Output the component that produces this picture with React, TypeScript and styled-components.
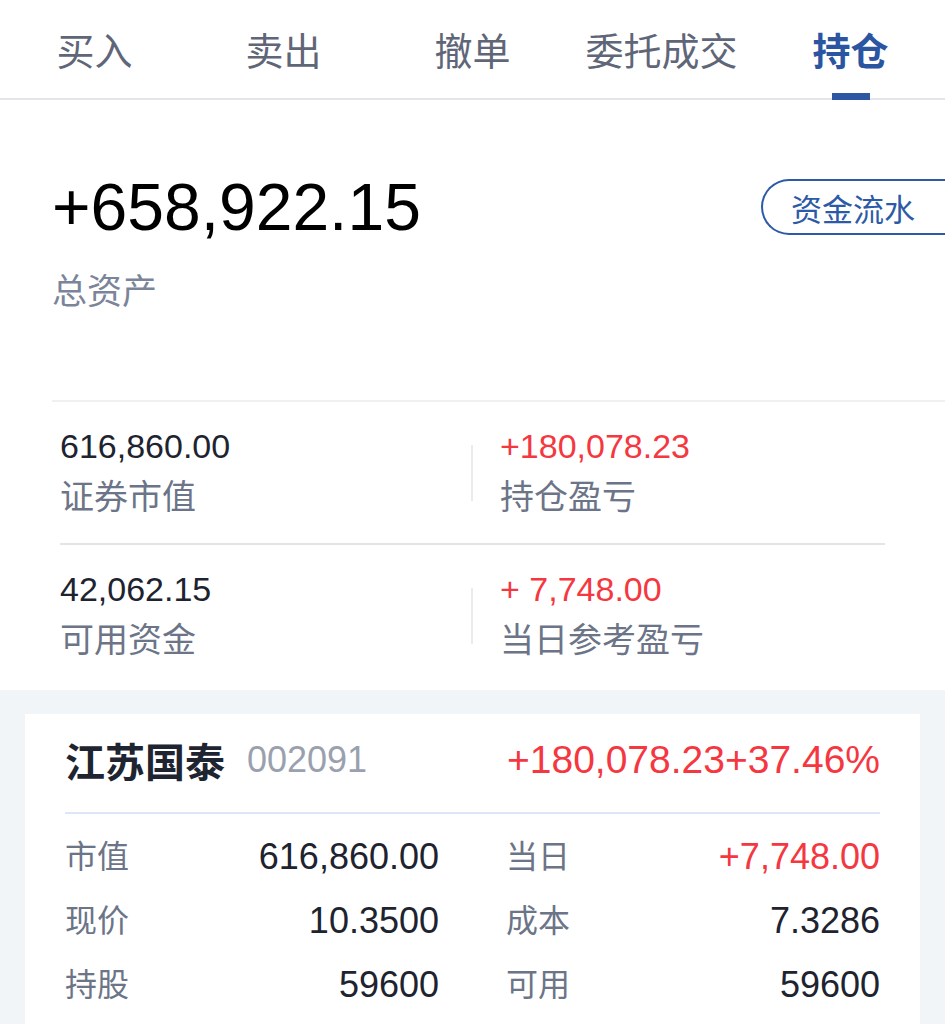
import React from "react";
import styled, { createGlobalStyle } from "styled-components";

const GlobalStyle = createGlobalStyle`
  * { box-sizing: border-box; }
  body {
    margin: 0;
    background: #ffffff;
    font-family: "Liberation Sans", "Noto Sans CJK SC", sans-serif;
  }
`;

const tabs = ["买入", "卖出", "撤单", "委托成交", "持仓"];

const stats = [
  [
    { value: "616,860.00", label: "证券市值", up: false },
    { value: "+180,078.23", label: "持仓盈亏", up: true },
  ],
  [
    { value: "42,062.15", label: "可用资金", up: false },
    { value: "+ 7,748.00", label: "当日参考盈亏", up: true },
  ],
];

const details = [
  ["市值", "616,860.00", "当日", "+7,748.00"],
  ["现价", "10.3500", "成本", "7.3286"],
  ["持股", "59600", "可用", "59600"],
];

const App = () => {
  return (
    <>
      <GlobalStyle />
      <Page>
        <TabBar>
          {tabs.map((t, i) => (
            <Tab key={t} active={i === tabs.length - 1}>
              {t}
              {i === tabs.length - 1 && <Indicator />}
            </Tab>
          ))}
        </TabBar>

        <Summary>
          <TotalRow>
            <Total>+658,922.15</Total>
            <FlowButton>资金流水</FlowButton>
          </TotalRow>
          <TotalLabel>总资产</TotalLabel>
        </Summary>

        <Stats>
          {stats.map((row, r) => (
            <StatRow key={r} last={r === stats.length - 1}>
              <StatCell>
                <StatValue up={row[0].up}>{row[0].value}</StatValue>
                <StatLabel>{row[0].label}</StatLabel>
              </StatCell>
              <Sep />
              <StatCell right>
                <StatValue up={row[1].up}>{row[1].value}</StatValue>
                <StatLabel>{row[1].label}</StatLabel>
              </StatCell>
            </StatRow>
          ))}
        </Stats>

        <Holdings>
          <Card>
            <CardHeader>
              <Name>江苏国泰</Name>
              <Code>002091</Code>
              <Profit>+180,078.23+37.46%</Profit>
            </CardHeader>
            <DetailList>
              {details.map((d) => (
                <DetailRow key={d[0]}>
                  <Pair>
                    <DLabel>{d[0]}</DLabel>
                    <DValue>{d[1]}</DValue>
                  </Pair>
                  <Pair>
                    <DLabel>{d[2]}</DLabel>
                    <DValue up={d[3].startsWith("+")}>{d[3]}</DValue>
                  </Pair>
                </DetailRow>
              ))}
            </DetailList>
          </Card>
        </Holdings>
      </Page>
    </>
  );
};

export default App;

const Page = styled.div`
  width: 945px;
  overflow: hidden;
`;

const TabBar = styled.div`
  display: flex;
  height: 100px;
  border-bottom: 2px solid #e4e5ea;
`;

const Tab = styled.div<{ active?: boolean }>`
  position: relative;
  flex: 1;
  display: flex;
  align-items: center;
  justify-content: center;
  padding-bottom: 2px;
  font-size: 38px;
  font-weight: ${(p) => (p.active ? 700 : 400)};
  color: ${(p) => (p.active ? "#2b55a1" : "#5f6678")};
`;

const Indicator = styled.span`
  position: absolute;
  left: 50%;
  bottom: -2px;
  width: 38px;
  height: 7px;
  margin-left: -19px;
  background: #2d57a2;
`;

const Summary = styled.div`
  padding: 74px 0 0 52px;
  height: 300px;
`;

const TotalRow = styled.div`
  display: flex;
  align-items: center;
  justify-content: space-between;
  height: 66px;
`;

const Total = styled.div`
  font-size: 66px;
  line-height: 66px;
  color: #000000;
`;

const FlowButton = styled.div`
  display: flex;
  align-items: center;
  height: 56px;
  padding: 0 30px 0 28px;
  border: 2px solid #2d5aa6;
  border-right: none;
  border-radius: 28px 0 0 28px;
  font-size: 31px;
  color: #2d5aa6;
`;

const TotalLabel = styled.div`
  margin-top: 30px;
  font-size: 35px;
  line-height: 44px;
  color: #7b859a;
`;

const Stats = styled.div`
  margin-left: 52px;
  border-top: 2px solid #f0f0f2;
`;

const StatRow = styled.div<{ last?: boolean }>`
  display: grid;
  grid-template-columns: 411px 2px 1fr;
  align-items: center;
  margin: 0 60px 0 8px;
  padding: 24px 0 ${(p) => (p.last ? "28px" : "24px")};
  border-bottom: ${(p) => (p.last ? "none" : "2px solid #e3e3e8")};
`;

const StatCell = styled.div<{ right?: boolean }>`
  display: flex;
  flex-direction: column;
  gap: 9px;
  padding-left: ${(p) => (p.right ? "27px" : "0")};
`;

const StatValue = styled.div<{ up?: boolean }>`
  font-size: 34px;
  line-height: 40px;
  color: ${(p) => (p.up ? "#f5373f" : "#1e2330")};
`;

const StatLabel = styled.div`
  font-size: 34px;
  line-height: 44px;
  color: #6c7487;
`;

const Sep = styled.div`
  width: 2px;
  height: 56px;
  background: #ebebee;
`;

const Holdings = styled.div`
  background: #f2f5f7;
  padding: 24px 25px 40px;
`;

const Card = styled.div`
  background: #ffffff;
  padding: 0 40px 20px;
`;

const CardHeader = styled.div`
  display: flex;
  align-items: center;
  height: 100px;
  padding-bottom: 6px;
  border-bottom: 2px solid #dde6f7;
`;

const Name = styled.div`
  font-size: 40px;
  font-weight: 700;
  color: #1f2431;
`;

const Code = styled.div`
  margin-left: 22px;
  font-size: 36px;
  color: #9aa1ae;
`;

const Profit = styled.div`
  margin-left: auto;
  font-size: 39px;
  color: #f5373f;
`;

const DetailList = styled.div`
  padding-top: 11px;
`;

const DetailRow = styled.div`
  display: grid;
  grid-template-columns: 1fr 1fr;
  column-gap: 67px;
  height: 64px;
  align-items: center;
`;

const Pair = styled.div`
  display: flex;
  justify-content: space-between;
  align-items: center;
`;

const DLabel = styled.div`
  font-size: 32px;
  line-height: 40px;
  padding-bottom: 1px;
  color: #6c7487;
`;

const DValue = styled.div<{ up?: boolean }>`
  font-size: 36px;
  line-height: 40px;
  color: ${(p) => (p.up ? "#f5373f" : "#1e2330")};
`;
